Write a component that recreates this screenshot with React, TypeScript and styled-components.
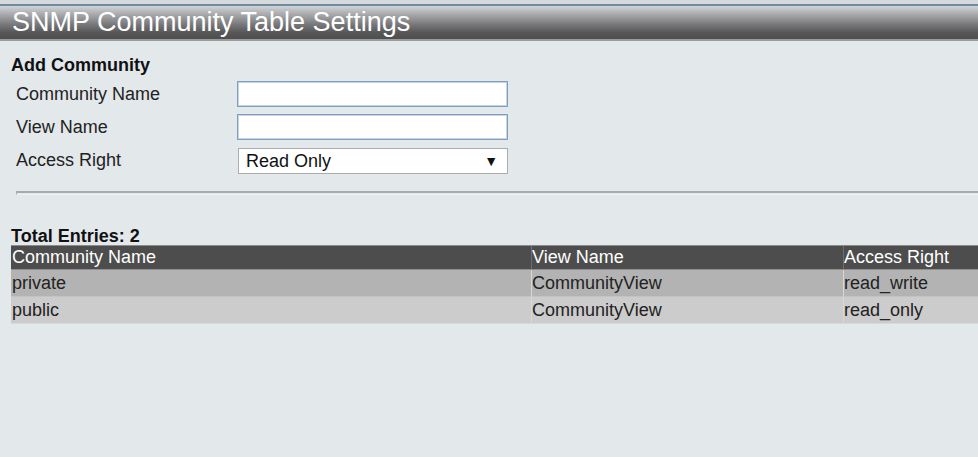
import React from "react";
import styled, { createGlobalStyle } from "styled-components";

const Global = createGlobalStyle`
  html, body { margin: 0; padding: 0; background: #e3e8eb; overflow: hidden; }
  body { font-family: "Liberation Sans", Arial, sans-serif; color: #222; }
`;

const Page = styled.div`
  width: 978px;
  height: 457px;
  background: #e3e8eb;
  display: flex;
  flex-direction: column;
`;

const TopStrip = styled.div`
  height: 4px;
  background: #d6dadd;
  border-bottom: 2px solid #6b8ca1;
`;

const TitleBar = styled.div`
  height: 35px;
  display: flex;
  align-items: center;
  padding-left: 12px;
  background: linear-gradient(to bottom, #d3d4d7 0%, #a9aaad 25%, #7a7a7d 55%, #575758 80%, #4f4f4f 100%);
  border-bottom: 2px solid #9c9c9c;
  color: #fff;
  font-size: 27px;
  line-height: 33px;
  box-sizing: border-box;
`;

const Content = styled.div`
  padding: 14px 0 0 11px;
  display: flex;
  flex-direction: column;
`;

const SectionTitle = styled.div`
  font-weight: bold;
  font-size: 18px;
  line-height: 20px;
  color: #111;
  margin-bottom: 6px;
`;

const FormGrid = styled.div`
  display: grid;
  grid-template-columns: 221px 271px;
  row-gap: 7px;
  padding-left: 5px;
  align-items: center;
`;

const Label = styled.div`
  font-size: 18px;
  color: #222;
`;

const TextInput = styled.input`
  box-sizing: border-box;
  width: 271px;
  height: 26px;
  border: 1px solid #7e9fc1;
  box-shadow: inset 0 0 0 1px #c4d4e4;
  background: #fff;
  margin: 0;
  font-family: inherit;
  font-size: 18px;
`;

const SelectBox = styled.div`
  box-sizing: border-box;
  width: 270px;
  margin: 1px 0 0 1px;
  height: 26px;
  border: 1px solid #acacac;
  background: #fff;
  display: flex;
  align-items: center;
  justify-content: space-between;
  padding: 0 9px 0 7px;
  font-size: 18px;
  color: #111;
`;

const Caret = styled.span`
  font-size: 14px;
  color: #111;
`;

const Rule = styled.div`
  margin: 17px 0 0 5px;
  height: 1px;
  border-top: 2px solid #a9abac;
  border-left: 1px solid #a9abac;
  border-bottom: 1px solid #eef1f2;
`;

const EntriesTitle = styled(SectionTitle)`
  line-height: 18px;
  margin: 32px 0 0 0;
`;

const Table = styled.div`
  display: grid;
  grid-template-columns: 520px 312px 1fr;
  border-top: 1px solid #8a8a8a;
`;

const Cell = styled.div<{ $kind: "head" | "odd" | "even" }>`
  height: ${(p) => (p.$kind === "head" ? "24px" : "27px")};
  line-height: ${(p) => (p.$kind === "head" ? "23px" : "26px")};
  font-size: 18px;
  padding-left: 0;
  white-space: nowrap;
  overflow: hidden;
  box-sizing: border-box;
  border-left: 1px solid ${(p) => (p.$kind === "head" ? "#6e6e6e" : "#d8d8d8")};
  &:nth-child(3n + 1) { border-left: none; padding-left: 1px; }
  border-bottom: 1px solid ${(p) => (p.$kind === "head" ? "#8f8f8f" : p.$kind === "odd" ? "#c3c3c3" : "#d9d9d9")};
  background: ${(p) => (p.$kind === "head" ? "#4d4d4d" : p.$kind === "odd" ? "#b3b3b3" : "#cccccc")};
  color: ${(p) => (p.$kind === "head" ? "#fff" : "#222")};
`;

const rows = [
  ["private", "CommunityView", "read_write"],
  ["public", "CommunityView", "read_only"],
];

export default function App() {
  return (
    <Page>
      <Global />
      <TopStrip />
      <TitleBar>SNMP Community Table Settings</TitleBar>
      <Content>
        <SectionTitle>Add Community</SectionTitle>
        <FormGrid>
          <Label>Community Name</Label>
          <TextInput type="text" />
          <Label>View Name</Label>
          <TextInput type="text" />
          <Label>Access Right</Label>
          <SelectBox>
            <span>Read Only</span>
            <Caret>▼</Caret>
          </SelectBox>
        </FormGrid>
        <Rule />
        <EntriesTitle>Total Entries: 2</EntriesTitle>
        <Table>
          <Cell $kind="head">Community Name</Cell>
          <Cell $kind="head">View Name</Cell>
          <Cell $kind="head">Access Right</Cell>
          {rows.map((r, i) =>
            r.map((c, j) => (
              <Cell key={`${i}-${j}`} $kind={i % 2 === 0 ? "odd" : "even"}>
                {c}
              </Cell>
            ))
          )}
        </Table>
      </Content>
    </Page>
  );
}
